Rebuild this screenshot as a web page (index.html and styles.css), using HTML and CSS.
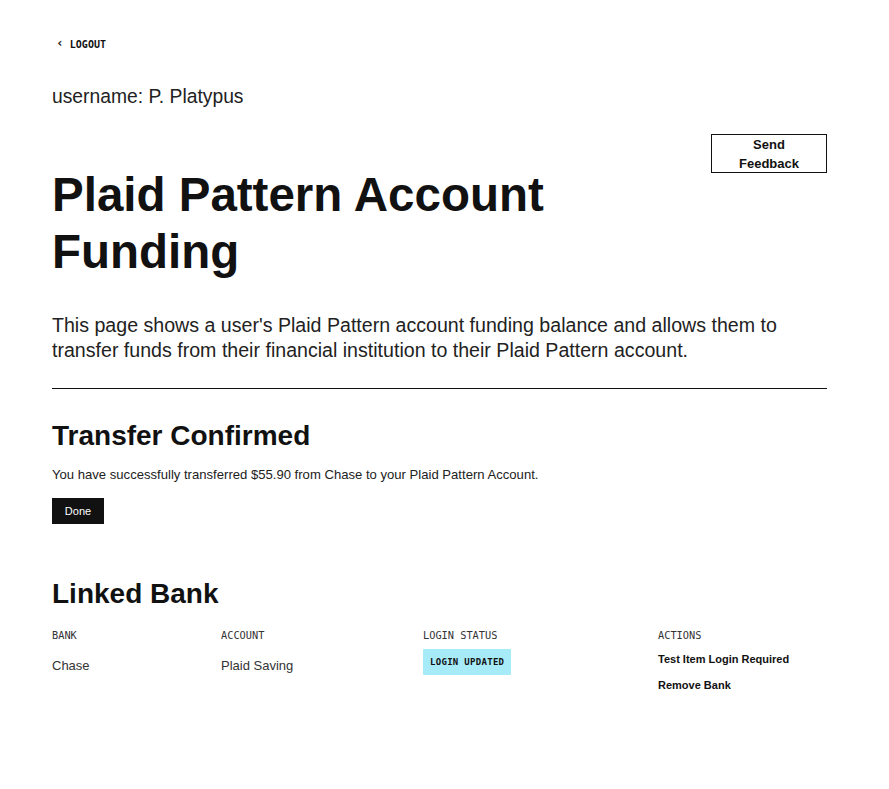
FILE: index.html
```html
<!DOCTYPE html>
<html>
<head>
<meta charset="utf-8">
<link rel="stylesheet" href="styles.css">
</head>
<body>
<div class="page">
  <a class="logout" href="#"><span class="chev">&lsaquo;</span> LOGOUT</a>
  <div class="username">username: P. Platypus</div>
  <div class="head-row">
    <h1 class="title">Plaid Pattern Account Funding</h1>
    <button class="feedback">Send Feedback</button>
  </div>
  <p class="intro">This page shows a user's Plaid Pattern account funding balance and allows them to transfer funds from their financial institution to their Plaid Pattern account.</p>
  <hr class="rule">
  <h2 class="section-title">Transfer Confirmed</h2>
  <p class="confirm-text">You have successfully transferred $55.90 from Chase to your Plaid Pattern Account.</p>
  <button class="done">Done</button>
  <h2 class="section-title linked">Linked Bank</h2>
  <div class="bank-table">
    <div class="th">BANK</div>
    <div class="th">ACCOUNT</div>
    <div class="th">LOGIN STATUS</div>
    <div class="th">ACTIONS</div>
    <div class="td">Chase</div>
    <div class="td">Plaid Saving</div>
    <div class="td status"><span class="badge">LOGIN UPDATED</span></div>
    <div class="td actions">
      <a href="#" class="action">Test Item Login Required</a>
      <a href="#" class="action">Remove Bank</a>
    </div>
  </div>
</div>
</body>
</html>
```

FILE: styles.css
```css
* { box-sizing: border-box; }
body {
  margin: 0;
  background: #fff;
  color: #111;
  font-family: "Liberation Sans", Arial, sans-serif;
}
.page {
  padding: 33px 62px 60px 52px;
  width: 889px;
}
.logout {
  display: inline-flex;
  align-items: center;
  gap: 6px;
  font-family: "DejaVu Sans Mono", monospace;
  font-weight: bold;
  font-size: 10px;
  color: #111;
  text-decoration: none;
  margin-left: 4px;
  height: 16px;
}
.chev { font-size: 13px; line-height: 10px; margin-top: -3px; }
.username {
  margin-top: 32px;
  font-size: 19.3px;
  color: #222;
  line-height: 24px;
}
.head-row {
  display: flex;
  justify-content: space-between;
  align-items: flex-start;
  margin-top: 25px;
}
.title {
  margin: 32px 0 0;
  font-size: 47.5px;
  line-height: 57px;
  font-weight: bold;
  width: 560px;
  color: #111;
}
.feedback {
  width: 116px;
  height: 39px;
  border: 1px solid #111;
  background: #fff;
  font-family: "Liberation Sans", Arial, sans-serif;
  font-size: 13px;
  font-weight: bold;
  line-height: 19px;
  padding: 0 18px;
  color: #111;
}
.intro {
  margin: 33px 0 0;
  font-size: 19.6px;
  line-height: 25px;
  color: #222;
  width: 775px;
}
.rule {
  margin: 25px 0 0;
  border: 0;
  border-top: 1px solid #111;
}
.section-title {
  margin: 30px 0 0;
  font-size: 28px;
  line-height: 34px;
  font-weight: bold;
}
.confirm-text {
  margin: 13px 0 0;
  font-size: 13.1px;
  line-height: 18px;
  color: #222;
}
.done {
  display: block;
  margin-top: 14px;
  width: 52px;
  height: 26px;
  background: #111;
  color: #fff;
  border: 0;
  font-family: "Liberation Sans", Arial, sans-serif;
  font-size: 11px;
  padding: 0;
}
.linked { margin-top: 53px; }
.bank-table {
  display: grid;
  grid-template-columns: 169px 202px 235px 1fr;
  margin-top: 18px;
}
.th {
  font-family: "DejaVu Sans Mono", monospace;
  font-size: 10.3px;
  color: #333;
  line-height: 12px;
}
.td {
  margin-top: 8px;
  font-size: 13px;
  color: #333;
  line-height: 18px;
  padding-top: 8px;
}
.status {
  display: flex;
  align-items: flex-start;
  padding-top: 0;
}
.badge {
  display: block;
  background: #a7ebf9;
  font-family: "DejaVu Sans Mono", monospace;
  font-weight: bold;
  font-size: 9px;
  letter-spacing: 0.3px;
  padding: 0 7px;
  line-height: 26px;
  height: 26px;
  border-radius: 1px;
  color: #111;
}
.actions {
  display: flex;
  flex-direction: column;
  gap: 8px;
  padding-top: 1px;
}
.action {
  font-size: 11px;
  font-weight: bold;
  color: #111;
  text-decoration: none;
  line-height: 18px;
}
```
